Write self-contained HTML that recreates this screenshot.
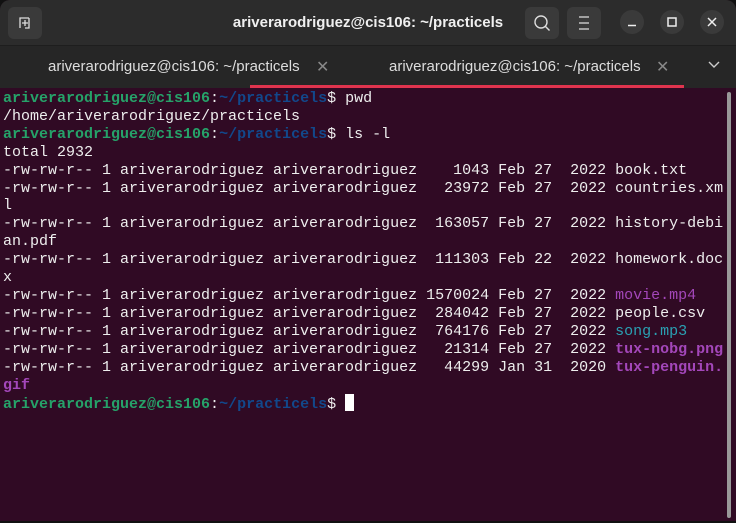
<!DOCTYPE html>
<html><head><meta charset="utf-8"><style>
*{margin:0;padding:0;box-sizing:border-box}
html,body{width:736px;height:523px;overflow:hidden;background:#111}
.win{position:absolute;left:0;top:0;width:736px;height:521px;background:#300a24;border-radius:10px 10px 0 0;overflow:hidden}
.hdr{position:absolute;left:0;top:0;width:736px;height:46px;background:#2c2c2c;border-bottom:1px solid #1e1e1e}
.title{position:absolute;left:0;right:0;top:14px;text-align:center;color:#f0f0f0;font:bold 15px "Liberation Sans",sans-serif}
.btn{position:absolute;top:7px;width:34px;height:32px;background:#3a3a3a;border-radius:6px}
.circ{position:absolute;top:10px;width:24px;height:24px;border-radius:50%;background:#3a3a3a}
.tabs{position:absolute;left:0;top:46px;width:736px;height:42px;background:#262626}
.tab{position:absolute;top:12px;color:#ddd;font:15px "Liberation Sans",sans-serif}
.x{position:absolute;top:11px;color:#888;font:16px "Liberation Sans",sans-serif}
.ul{position:absolute;left:250px;top:39px;width:434px;height:3px;background:#e0344e}
pre{position:absolute;left:3px;top:90px;font:15px/17.9px "Liberation Mono",monospace;color:#eee;letter-spacing:0}
.g{color:#26a269;font-weight:bold}.b{color:#12488b;font-weight:bold}.m{color:#a347ba}.mb{color:#a347ba;font-weight:bold}.c{color:#2aa1b3}
.cur{display:inline-block;width:9px;height:17px;background:#fff;vertical-align:-3px}
.sb{position:absolute;left:727px;top:92px;width:4px;height:426px;background:#999;border-radius:2px}
</style></head><body>
<div class="win">
<div class="hdr">
 <div class="btn" style="left:8px;width:34px"><svg width="34" height="32"><path d="M12 21V11h9M21 11v10h-4M14 16h6M17 13v6" stroke="#ddd" stroke-width="1.3" fill="none"/></svg></div>
 <div class="title">ariverarodriguez@cis106: ~/practicels</div>
 <div class="btn" style="left:525px"><svg width="34" height="32"><circle cx="16" cy="15" r="6" stroke="#ddd" stroke-width="1.4" fill="none"/><path d="M20.5 19.5l4 4" stroke="#ddd" stroke-width="1.4"/></svg></div>
 <div class="btn" style="left:567px"><svg width="34" height="32"><path d="M12 10h10M12 16h10M12 22h10" stroke="#ddd" stroke-width="1.3"/></svg></div>
 <div class="circ" style="left:620px"><svg width="24" height="24"><path d="M8 15.5h8" stroke="#eee" stroke-width="1.5"/></svg></div>
 <div class="circ" style="left:660px"><svg width="24" height="24"><rect x="8" y="8" width="8" height="8" stroke="#eee" stroke-width="1.5" fill="none"/></svg></div>
 <div class="circ" style="left:700px"><svg width="24" height="24"><path d="M8 8l8 8M16 8l-8 8" stroke="#eee" stroke-width="1.5"/></svg></div>
</div>
<div class="tabs">
 <div class="tab" style="left:48px">ariverarodriguez@cis106: ~/practicels</div><div class="x" style="left:316px">✕</div>
 <div class="tab" style="left:389px">ariverarodriguez@cis106: ~/practicels</div><div class="x" style="left:656px">✕</div>
 <div class="x" style="left:707px;color:#ccc"><svg width="14" height="14"><path d="M2 5l5 5 5-5" stroke="#ccc" stroke-width="1.4" fill="none"/></svg></div>
 <div class="ul"></div>
</div>
<pre><span class="g">ariverarodriguez@cis106</span>:<span class="b">~/practicels</span>$ pwd
/home/ariverarodriguez/practicels
<span class="g">ariverarodriguez@cis106</span>:<span class="b">~/practicels</span>$ ls -l
total 2932
-rw-rw-r-- 1 ariverarodriguez ariverarodriguez    1043 Feb 27  2022 book.txt
-rw-rw-r-- 1 ariverarodriguez ariverarodriguez   23972 Feb 27  2022 countries.xm
l
-rw-rw-r-- 1 ariverarodriguez ariverarodriguez  163057 Feb 27  2022 history-debi
an.pdf
-rw-rw-r-- 1 ariverarodriguez ariverarodriguez  111303 Feb 22  2022 homework.doc
x
-rw-rw-r-- 1 ariverarodriguez ariverarodriguez 1570024 Feb 27  2022 <span class="m">movie.mp4</span>
-rw-rw-r-- 1 ariverarodriguez ariverarodriguez  284042 Feb 27  2022 people.csv
-rw-rw-r-- 1 ariverarodriguez ariverarodriguez  764176 Feb 27  2022 <span class="c">song.mp3</span>
-rw-rw-r-- 1 ariverarodriguez ariverarodriguez   21314 Feb 27  2022 <span class="mb">tux-nobg.png</span>
-rw-rw-r-- 1 ariverarodriguez ariverarodriguez   44299 Jan 31  2020 <span class="mb">tux-penguin.
gif</span>
<span class="g">ariverarodriguez@cis106</span>:<span class="b">~/practicels</span>$ <span class="cur"></span></pre>
<div class="sb"></div>
</div>
</body></html>
